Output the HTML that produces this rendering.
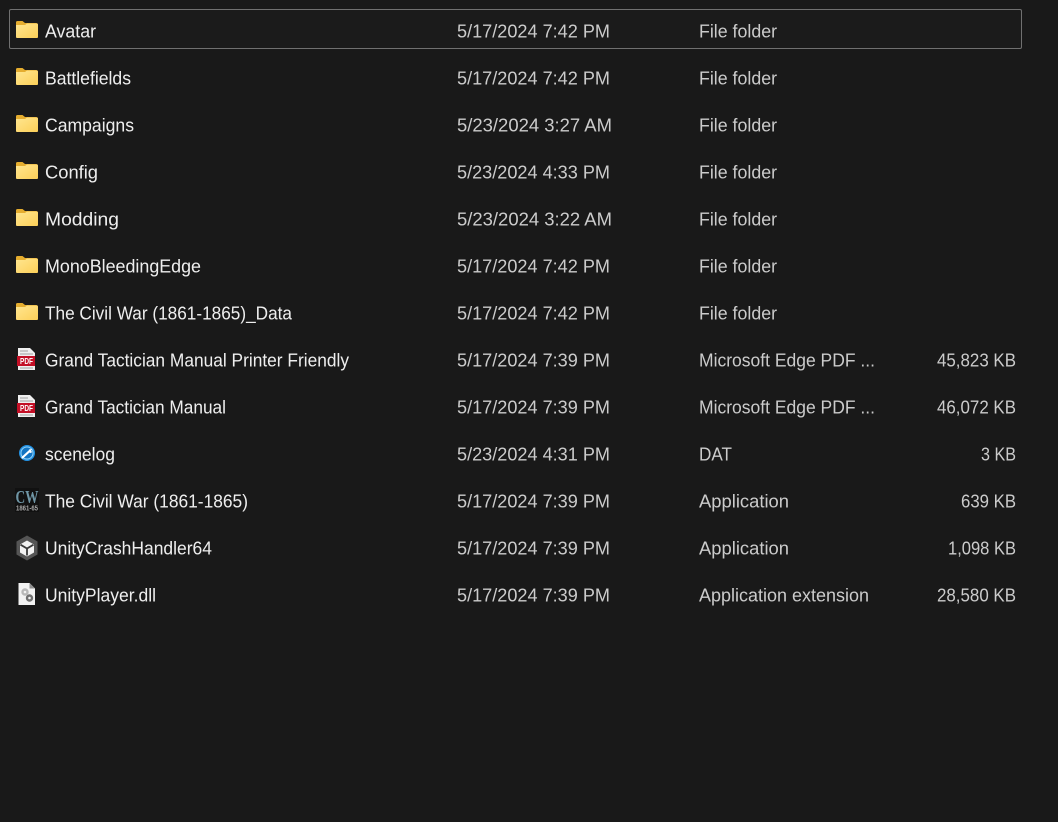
<!DOCTYPE html>
<html><head><meta charset="utf-8"><title>Files</title>
<style>
html,body{margin:0;padding:0;background:#191919;width:1058px;height:822px;overflow:hidden}
svg{display:block}
text{font-family:"Liberation Sans",sans-serif;font-size:18px}
.n{fill:#eeeeee}.d{fill:#cbcbcb}
</style></head><body>
<svg width="1058" height="822" viewBox="0 0 1058 822" xmlns="http://www.w3.org/2000/svg">
<defs>
<linearGradient id="fg" x1="0" y1="0" x2="1" y2="1"><stop offset="0" stop-color="#ffe690"/><stop offset="1" stop-color="#fccf58"/></linearGradient>
<g id="folder">
<path d="M16 22.500q0-1.500 1.500-1.500h5l2.500 2h11q2 0 2 2v2h-22z" fill="#e5ad2f"/>
<path d="M16 25h9l2-1.500h9.500q1.500 0 1.500 1.500v12q0 1-1 1h-20q-1 0-1-1z" fill="url(#fg)"/>
</g>
<g id="pdf">
<path d="M18 348h12l5 5v17h-17z" fill="#efefef"/>
<path d="M20 351h8M20 354h13M20 368h13" stroke="#a0a0a0" stroke-width="1"/>
<rect x="17" y="356" width="18" height="10" fill="#c30f26"/>
<text x="20" y="364" style="font-size:8.500px;font-weight:bold" fill="#fff" textLength="13" lengthAdjust="spacingAndGlyphs">PDF</text>
</g>
</defs>
<rect x="9.500" y="9.500" width="1012" height="39" rx="1.500" fill="#1b1b1b" stroke="#707070"/>
<use href="#folder"/>
<use href="#folder" y="47"/>
<use href="#folder" y="94"/>
<use href="#folder" y="141"/>
<use href="#folder" y="188"/>
<use href="#folder" y="235"/>
<use href="#folder" y="282"/>
<use href="#pdf"/>
<use href="#pdf" y="47"/>
<circle cx="27" cy="453" r="8" fill="#2392e4"/>
<circle cx="27" cy="453" r="6" fill="#1274c2" stroke="#8fd0f6" stroke-width="1"/>
<path d="M22.500 457.500l6-5.500" stroke="#fff" stroke-width="2.200" stroke-linecap="round"/>
<path d="M28 452l1-2.500 3-.5-1 2 1.500 1-2 1z" fill="#fff"/>
<rect x="15" y="488" width="24" height="24" fill="#111"/>
<text x="15.500" y="503" style="font-size:18px;font-weight:bold;font-family:'Liberation Serif',serif" fill="#6f96a6" textLength="23" lengthAdjust="spacingAndGlyphs">CW</text>
<text x="16" y="510.500" style="font-size:7px;font-weight:bold" fill="#a8a8a8" textLength="22" lengthAdjust="spacingAndGlyphs">1861-65</text>
<path d="M27 535.500l10.500 6v13l-10.500 6-10.500-6v-13z" fill="#555"/>
<path d="M27 540.500l7 4v8l-7 4-7-4v-8z" fill="#f2f2f2"/>
<path d="M27 548.500v7M27 548.500l-6.500-3.800M27 548.500l6.500-3.800" stroke="#3a3a3a" stroke-width="1.800"/>
<path d="M18.500 583h11l5.500 5.500v16.500h-16.500z" fill="#f2f2f2"/>
<path d="M29.500 583v5.500h5.500z" fill="#8f8f8f"/>
<circle cx="25" cy="592" r="2.500" fill="none" stroke="#b8b8b8" stroke-width="2.400"/>
<circle cx="29.500" cy="598" r="2.500" fill="none" stroke="#707070" stroke-width="2.400"/>

<text class="n" x="45" y="37.500" textLength="51" lengthAdjust="spacingAndGlyphs">Avatar</text>
<text class="n" x="45" y="84.500" textLength="86" lengthAdjust="spacingAndGlyphs">Battlefields</text>
<text class="n" x="45" y="131.500" textLength="89" lengthAdjust="spacingAndGlyphs">Campaigns</text>
<text class="n" x="45" y="178.500" textLength="53" lengthAdjust="spacingAndGlyphs">Config</text>
<text class="n" x="45" y="225.500" textLength="74" lengthAdjust="spacingAndGlyphs">Modding</text>
<text class="n" x="45" y="272.500" textLength="156" lengthAdjust="spacingAndGlyphs">MonoBleedingEdge</text>
<text class="n" x="45" y="319.500" textLength="247" lengthAdjust="spacingAndGlyphs">The Civil War (1861-1865)_Data</text>
<text class="n" x="45" y="366.500" textLength="304" lengthAdjust="spacingAndGlyphs">Grand Tactician Manual Printer Friendly</text>
<text class="n" x="45" y="413.500" textLength="181" lengthAdjust="spacingAndGlyphs">Grand Tactician Manual</text>
<text class="n" x="45" y="460.500" textLength="70" lengthAdjust="spacingAndGlyphs">scenelog</text>
<text class="n" x="45" y="507.500" textLength="203" lengthAdjust="spacingAndGlyphs">The Civil War (1861-1865)</text>
<text class="n" x="45" y="554.500" textLength="167" lengthAdjust="spacingAndGlyphs">UnityCrashHandler64</text>
<text class="n" x="45" y="601.500" textLength="111" lengthAdjust="spacingAndGlyphs">UnityPlayer.dll</text>

<text class="d" x="457" y="37.500" textLength="153" lengthAdjust="spacingAndGlyphs">5/17/2024 7:42 PM</text>
<text class="d" x="457" y="84.500" textLength="153" lengthAdjust="spacingAndGlyphs">5/17/2024 7:42 PM</text>
<text class="d" x="457" y="131.500" textLength="155" lengthAdjust="spacingAndGlyphs">5/23/2024 3:27 AM</text>
<text class="d" x="457" y="178.500" textLength="153" lengthAdjust="spacingAndGlyphs">5/23/2024 4:33 PM</text>
<text class="d" x="457" y="225.500" textLength="155" lengthAdjust="spacingAndGlyphs">5/23/2024 3:22 AM</text>
<text class="d" x="457" y="272.500" textLength="153" lengthAdjust="spacingAndGlyphs">5/17/2024 7:42 PM</text>
<text class="d" x="457" y="319.500" textLength="153" lengthAdjust="spacingAndGlyphs">5/17/2024 7:42 PM</text>
<text class="d" x="457" y="366.500" textLength="153" lengthAdjust="spacingAndGlyphs">5/17/2024 7:39 PM</text>
<text class="d" x="457" y="413.500" textLength="153" lengthAdjust="spacingAndGlyphs">5/17/2024 7:39 PM</text>
<text class="d" x="457" y="460.500" textLength="153" lengthAdjust="spacingAndGlyphs">5/23/2024 4:31 PM</text>
<text class="d" x="457" y="507.500" textLength="153" lengthAdjust="spacingAndGlyphs">5/17/2024 7:39 PM</text>
<text class="d" x="457" y="554.500" textLength="153" lengthAdjust="spacingAndGlyphs">5/17/2024 7:39 PM</text>
<text class="d" x="457" y="601.500" textLength="153" lengthAdjust="spacingAndGlyphs">5/17/2024 7:39 PM</text>

<text class="d" x="699" y="37.500" textLength="78" lengthAdjust="spacingAndGlyphs">File folder</text>
<text class="d" x="699" y="84.500" textLength="78" lengthAdjust="spacingAndGlyphs">File folder</text>
<text class="d" x="699" y="131.500" textLength="78" lengthAdjust="spacingAndGlyphs">File folder</text>
<text class="d" x="699" y="178.500" textLength="78" lengthAdjust="spacingAndGlyphs">File folder</text>
<text class="d" x="699" y="225.500" textLength="78" lengthAdjust="spacingAndGlyphs">File folder</text>
<text class="d" x="699" y="272.500" textLength="78" lengthAdjust="spacingAndGlyphs">File folder</text>
<text class="d" x="699" y="319.500" textLength="78" lengthAdjust="spacingAndGlyphs">File folder</text>
<text class="d" x="699" y="366.500" textLength="176" lengthAdjust="spacingAndGlyphs">Microsoft Edge PDF ...</text>
<text class="d" x="699" y="413.500" textLength="176" lengthAdjust="spacingAndGlyphs">Microsoft Edge PDF ...</text>
<text class="d" x="699" y="460.500" textLength="33" lengthAdjust="spacingAndGlyphs">DAT</text>
<text class="d" x="699" y="507.500" textLength="90" lengthAdjust="spacingAndGlyphs">Application</text>
<text class="d" x="699" y="554.500" textLength="90" lengthAdjust="spacingAndGlyphs">Application</text>
<text class="d" x="699" y="601.500" textLength="170" lengthAdjust="spacingAndGlyphs">Application extension</text>

<text class="d" x="937" y="366.500" textLength="79" lengthAdjust="spacingAndGlyphs">45,823 KB</text>
<text class="d" x="937" y="413.500" textLength="79" lengthAdjust="spacingAndGlyphs">46,072 KB</text>
<text class="d" x="981" y="460.500" textLength="35" lengthAdjust="spacingAndGlyphs">3 KB</text>
<text class="d" x="961" y="507.500" textLength="55" lengthAdjust="spacingAndGlyphs">639 KB</text>
<text class="d" x="948" y="554.500" textLength="68" lengthAdjust="spacingAndGlyphs">1,098 KB</text>
<text class="d" x="937" y="601.500" textLength="79" lengthAdjust="spacingAndGlyphs">28,580 KB</text>
</svg>
</body></html>
